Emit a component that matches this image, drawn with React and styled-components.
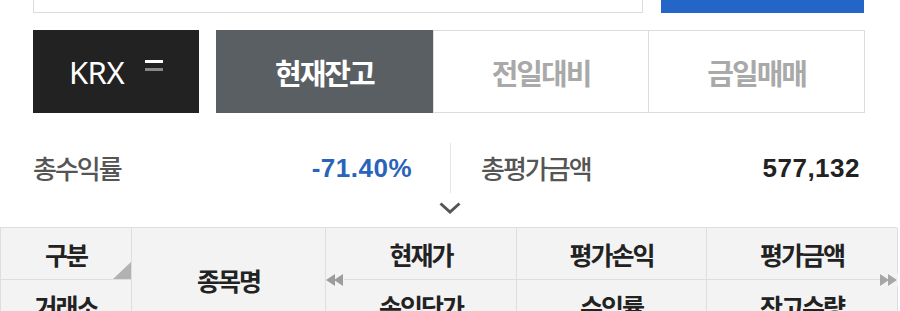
import React from "react";
import styled, { createGlobalStyle } from "styled-components";

const GlobalStyle = createGlobalStyle`
  html, body { margin: 0; padding: 0; background: #fff; overflow: hidden; }
  body { font-family: "Noto Sans CJK KR", "Noto Sans", sans-serif; }
  * { box-sizing: border-box; }
`;

const Page = styled.div`
  width: 900px;
  display: flex;
  flex-direction: column;
`;

const SearchRow = styled.div`
  display: flex;
  align-items: flex-end;
  gap: 18px;
  padding: 0 36px 0 33px;
  margin-top: -40px;
`;

const SearchInput = styled.input`
  flex: 1;
  height: 52px;
  border: 1px solid #dcdcdc;
  background: #fff;
  outline: none;
`;

const SearchButton = styled.button`
  width: 203px;
  height: 53px;
  border: none;
  background: #2366c8;
`;

const FilterRow = styled.div`
  display: flex;
  gap: 17px;
  height: 83px;
  margin-top: 17px;
  padding: 0 35px 0 33px;
`;

const ExchangeBox = styled.div`
  width: 166px;
  background: #222;
  color: #fff;
  display: flex;
  align-items: center;
  justify-content: center;
  gap: 21px;
  font-family: "Noto Sans", sans-serif;
  font-size: 31px;
  font-weight: 400;
  letter-spacing: -0.5px;
`;

const MenuIcon = styled.span`
  display: flex;
  flex-direction: column;
  gap: 5px;
  width: 18px;
  margin-top: -12px;
`;

const Bar = styled.span`
  display: block;
  height: 3px;
  background: ${(p) => p.$color};
`;

const Tabs = styled.div`
  flex: 1;
  display: grid;
  grid-template-columns: repeat(3, 1fr);
  border: 1px solid #dcdcdc;
`;

const Tab = styled.div`
  display: flex;
  align-items: center;
  justify-content: center;
  font-size: 29px;
  font-weight: 700;
  letter-spacing: -2px;
  color: ${(p) => (p.$active ? "#fff" : "#a9a9a9")};
  background: ${(p) => (p.$active ? "#5a5f64" : "#fff")};
  margin: ${(p) => (p.$active ? "-1px 0 -1px -1px" : "0")};
  border-left: ${(p) => (p.$first || p.$active ? "none" : "1px solid #dcdcdc")};
`;

const Summary = styled.div`
  display: grid;
  grid-template-columns: 450px 450px;
  height: 50px;
  margin-top: 30px;
`;

const SummaryCell = styled.div`
  display: flex;
  align-items: center;
  justify-content: space-between;
  padding: ${(p) => (p.$right ? "0 40px 0 30px" : "0 38px 0 33px")};
  border-left: ${(p) => (p.$right ? "1px solid #e6e6e6" : "none")};
`;

const Label = styled.span`
  font-size: 26px;
  font-weight: 500;
  letter-spacing: -2px;
  color: #555;
  margin-top: -2px;
`;

const Value = styled.span`
  font-family: "Liberation Sans", Arial, sans-serif;
  font-size: 26px;
  font-weight: 700;
  letter-spacing: 0.5px;
  color: ${(p) => p.$color};
`;

const ToggleRow = styled.div`
  height: 34px;
  display: flex;
  justify-content: center;
  padding-top: 9px;
`;

const Table = styled.div`
  position: relative;
  width: 897px;
  display: grid;
  grid-template-columns: 131px 194px 191px 190px 191px;
  grid-template-rows: 52px 52px;
  background: #f3f3f3;
  border-top: 1px solid #dedede;
  border-left: 1px solid #dedede;
`;

const Cell = styled.div`
  position: relative;
  display: flex;
  align-items: center;
  justify-content: center;
  font-size: 25px;
  font-weight: 700;
  letter-spacing: -2px;
  color: #222;
  border-right: 1px solid #dedede;
  border-bottom: 1px solid #dedede;
  grid-column: ${(p) => (p.$span ? "2" : "auto")};
  grid-row: ${(p) => (p.$span ? "1 / span 2" : "auto")};
  padding-top: ${(p) => (p.$span ? "1px" : "0")};
`;

const Corner = styled.span`
  position: absolute;
  right: 0;
  bottom: 0;
  width: 0;
  height: 0;
  border-left: 18px solid transparent;
  border-bottom: 17px solid #b2b2b2;
`;

const Arrow = styled.svg`
  position: absolute;
  top: 46px;
  left: ${(p) => p.$left};
  background: #f3f3f3;
`;

function Chevron() {
  return (
    <svg width="22" height="12" viewBox="0 0 22 12">
      <polyline points="1.5,1.5 11,10 20.5,1.5" fill="none" stroke="#555" strokeWidth="3" />
    </svg>
  );
}

export default function App() {
  return (
    <Page>
      <GlobalStyle />
      <SearchRow>
        <SearchInput />
        <SearchButton />
      </SearchRow>
      <FilterRow>
        <ExchangeBox>
          KRX
          <MenuIcon>
            <Bar $color="#fff" />
            <Bar $color="#888" />
          </MenuIcon>
        </ExchangeBox>
        <Tabs>
          <Tab $active $first>현재잔고</Tab>
          <Tab>전일대비</Tab>
          <Tab>금일매매</Tab>
        </Tabs>
      </FilterRow>
      <Summary>
        <SummaryCell>
          <Label>총수익률</Label>
          <Value $color="#2a64b8">-71.40%</Value>
        </SummaryCell>
        <SummaryCell $right>
          <Label>총평가금액</Label>
          <Value $color="#222">577,132</Value>
        </SummaryCell>
      </Summary>
      <ToggleRow>
        <Chevron />
      </ToggleRow>
      <Table>
        <Cell>
          구분
          <Corner />
        </Cell>
        <Cell $span>종목명</Cell>
        <Cell>현재가</Cell>
        <Cell>평가손익</Cell>
        <Cell>평가금액</Cell>
        <Cell>거래소</Cell>
        <Cell>손익단가</Cell>
        <Cell>수익률</Cell>
        <Cell>잔고수량</Cell>
        <Arrow $left="325px" width="18" height="12" viewBox="0 0 18 12">
          <polygon points="9,0 0,6 9,12" fill="#9c9c9c" />
          <polygon points="17,0 8,6 17,12" fill="#9c9c9c" />
        </Arrow>
        <Arrow $left="879px" width="18" height="12" viewBox="0 0 18 12">
          <polygon points="0,0 9,6 0,12" fill="#a6a6a6" />
          <polygon points="8,0 17,6 8,12" fill="#a6a6a6" />
        </Arrow>
      </Table>
    </Page>
  );
}
